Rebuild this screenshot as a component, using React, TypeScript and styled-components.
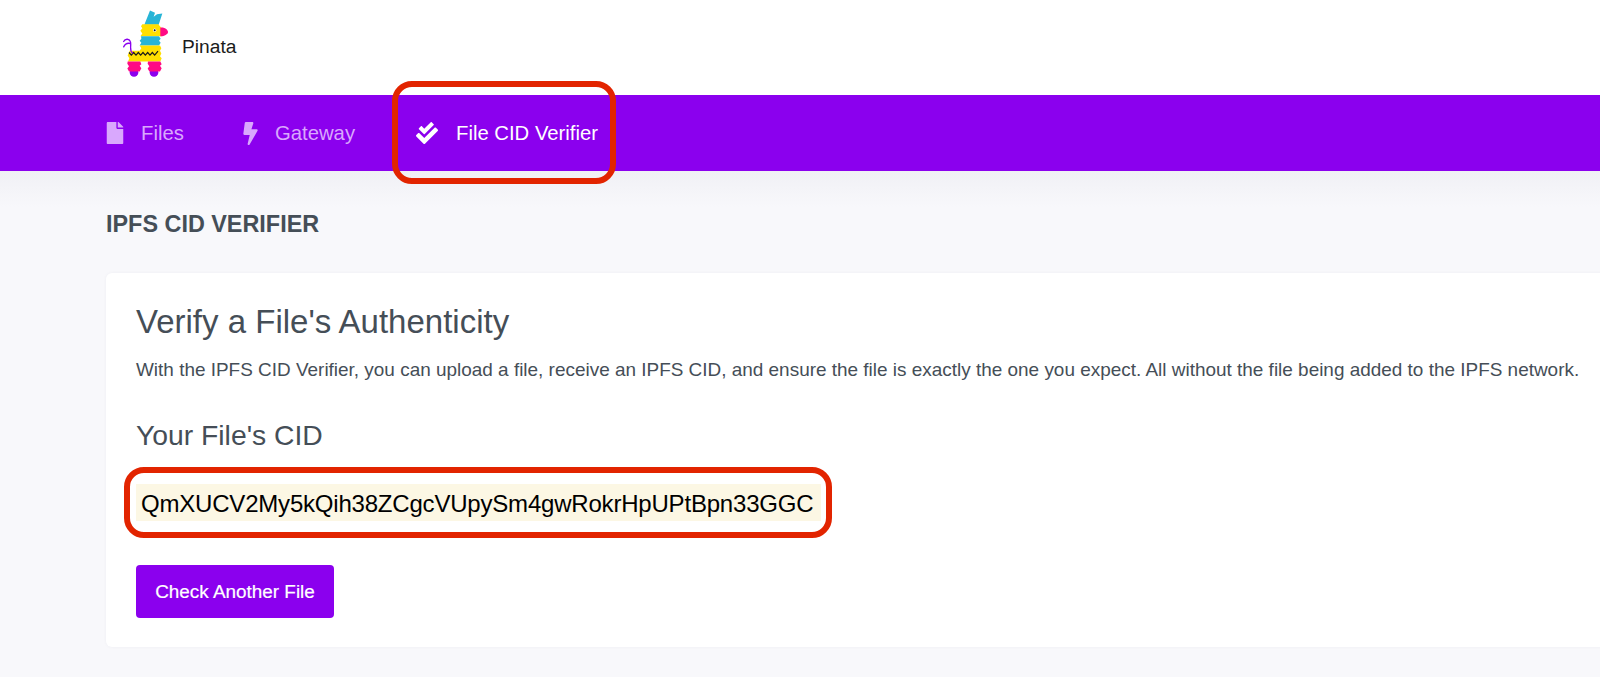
import styled, { createGlobalStyle } from 'styled-components';
import { FaBolt, FaCheckDouble, FaFile } from 'react-icons/fa';

const GlobalStyle = createGlobalStyle`
  html, body {
    margin: 0;
    padding: 0;
    height: 677px;
    overflow: hidden;
    background: #f8f8fb;
    font-family: "Liberation Sans", Arial, sans-serif;
  }
`;

const Page = styled.div`
  width: 1600px;
  height: 677px;
  overflow: hidden;
`;

const Header = styled.header`
  height: 95px;
  background: #fff;
  display: flex;
  align-items: flex-start;
  padding: 10px 0 0 123px;
  box-sizing: border-box;
  gap: 14px;
`;

const LogoText = styled.span`
  font-size: 19.2px;
  color: #1b1b1b;
  margin-top: 26px;
`;

const Nav = styled.nav`
  height: 76px;
  background: #8b00ee;
  display: flex;
  align-items: center;
  padding-left: 104px;
`;

const NavItem = styled.div<{ $active?: boolean; $width: number; $gap: number }>`
  position: relative;
  display: flex;
  align-items: center;
  width: ${(p) => p.$width}px;
  gap: ${(p) => p.$gap}px;
  font-size: 20.3px;
  color: ${(p) => (p.$active ? '#fff' : '#d9a8fd')};
  svg {
    flex: none;
  }
`;

const Annotation = styled.div<{ $top: number; $left: number; $width: number; $height: number }>`
  position: absolute;
  top: ${(p) => p.$top}px;
  left: ${(p) => p.$left}px;
  width: ${(p) => p.$width}px;
  height: ${(p) => p.$height}px;
  box-sizing: border-box;
  border: 6px solid #e22400;
  border-radius: 20px;
  pointer-events: none;
`;

const Main = styled.main`
  height: 506px;
  background: linear-gradient(#f0f0f5 0, #f8f8fb 36px);
  padding: 40px 0 0 106px;
  box-sizing: border-box;
`;

const PageTitle = styled.h2`
  margin: 0 0 35px;
  font-size: 23.4px;
  line-height: 27px;
  font-weight: 700;
  color: #454e57;
`;

const Card = styled.section`
  width: 1560px;
  height: 374px;
  background: #fff;
  border-radius: 6px;
  box-shadow: 0 0 3px rgba(60, 60, 100, 0.06);
  padding: 27px 0 0 30px;
  box-sizing: border-box;
`;

const CardTitle = styled.h1`
  margin: 0;
  font-size: 33px;
  line-height: 44px;
  font-weight: 400;
  color: #454e57;
`;

const CardText = styled.p`
  margin: 14px 0 0;
  font-size: 18.95px;
  line-height: 24px;
  color: #454e57;
  white-space: nowrap;
`;

const SubTitle = styled.h3`
  margin: 35px 0 0;
  font-size: 28.3px;
  line-height: 36px;
  font-weight: 400;
  color: #454e57;
`;

const CidBox = styled.div`
  position: relative;
  width: 685px;
  height: 37px;
  margin-top: 31px;
  background: #fcf7e4;
  color: #000;
  font-size: 24px;
  letter-spacing: -0.2px;
  line-height: 39px;
  padding-left: 5px;
  box-sizing: border-box;
  white-space: nowrap;
`;

const Button = styled.button`
  display: block;
  width: 198px;
  height: 53px;
  margin-top: 44px;
  padding: 0;
  border: 0;
  border-radius: 4px;
  background: #8b00ee;
  color: #fff;
  font-family: inherit;
  font-size: 18.9px;
  -webkit-text-stroke: 0.2px #fff;
`;

function PinataLogo() {
  return (
    <svg width="45" height="67" viewBox="100 30 135 200" aria-hidden="true">
      <path d="M164 74 L181 31 L196 38 L192 50 L202 42 L218 40 L207 74 Z" fill="#27b4d6" />
      <path d="M158 72 L206 72 L216 84 L216 108 L152 108 L158 100 L152 92 L158 84 L154 78 Z" fill="#ffdf00" />
      <path d="M212 83 C222 80 235 88 235 96 C235 102 222 109 212 108 Z" fill="#ff0a84" />
      <circle cx="195" cy="90" r="5" fill="#fff" />
      <circle cx="195" cy="90" r="3" fill="#111" />
      <path d="M154 108 L208 108 L213 116 L208 122 L213 128 L208 136 L150 136 L155 128 L150 122 L155 116 Z" fill="#27b4d6" />
      <path d="M150 136 L211 136 L215 144 L211 152 L215 160 L211 168 L216 174 L212 184 L115 184 L119 174 L114 166 L120 152 L150 152 L155 144 Z" fill="#ffdf00" />
      <path
        d="M118 157 L125 165 L132 157 L139 165 L146 157 L153 165 L160 157 L167 165 L174 157 L181 165 L188 157 L195 165 L205 153"
        fill="none"
        stroke="#1a1a1a"
        strokeWidth="3.5"
      />
      <ellipse cx="133" cy="217" rx="13" ry="13" fill="#8b00ee" />
      <ellipse cx="193" cy="217" rx="13" ry="13" fill="#8b00ee" />
      <path d="M114 184 L152 184 L155 192 L150 197 L155 204 L150 214 L118 214 L113 205 L118 198 L113 191 Z" fill="#ff0a84" />
      <path d="M175 184 L212 184 L216 192 L211 197 L216 204 L211 214 L179 214 L174 205 L179 198 L174 191 Z" fill="#ff0a84" />
      <path
        d="M128 158 C118 152 126 132 122 124 C118 114 106 116 102 124 M122 130 C114 128 106 132 102 140"
        fill="none"
        stroke="#8b00ee"
        strokeWidth="4"
        strokeLinecap="round"
      />
    </svg>
  );
}

export default function App() {
  return (
    <Page>
      <GlobalStyle />
      <Header>
        <PinataLogo />
        <LogoText>Pinata</LogoText>
      </Header>
      <Nav>
        <NavItem $width={135} $gap={15}>
          <FaFile size={22} />
          Files
        </NavItem>
        <NavItem $width={177} $gap={13}>
          <FaBolt size={23} />
          Gateway
        </NavItem>
        <NavItem $active $width={190} $gap={18}>
          <FaCheckDouble size={22} />
          File CID Verifier
          <Annotation $top={-41} $left={-24} $width={224} $height={103} />
        </NavItem>
      </Nav>
      <Main>
        <PageTitle>IPFS CID VERIFIER</PageTitle>
        <Card>
          <CardTitle>Verify a File's Authenticity</CardTitle>
          <CardText>
            With the IPFS CID Verifier, you can upload a file, receive an IPFS CID, and ensure the file is exactly the
            one you expect. All without the file being added to the IPFS network.
          </CardText>
          <SubTitle>Your File's CID</SubTitle>
          <CidBox>
            QmXUCV2My5kQih38ZCgcVUpySm4gwRokrHpUPtBpn33GGC
            <Annotation $top={-17} $left={-12} $width={708} $height={71} />
          </CidBox>
          <Button>Check Another File</Button>
        </Card>
      </Main>
    </Page>
  );
}
